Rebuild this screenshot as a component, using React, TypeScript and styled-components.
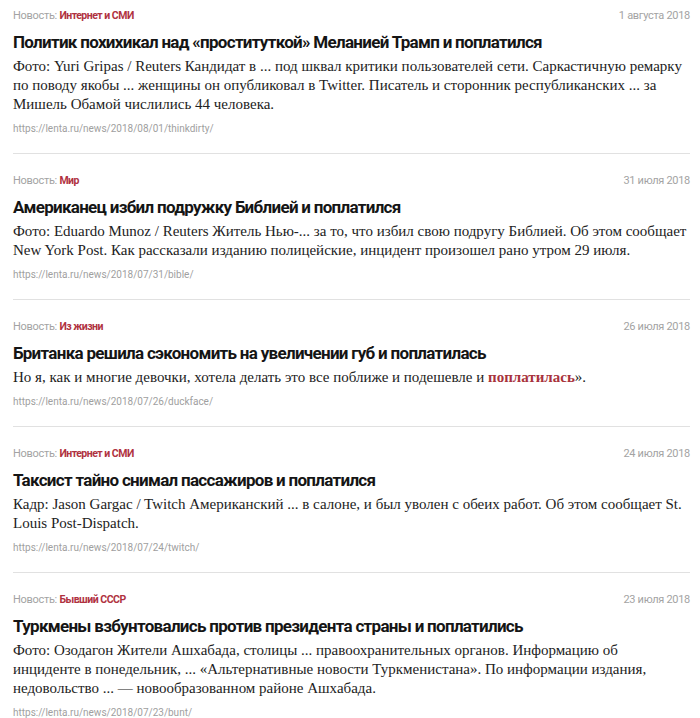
import styled, { createGlobalStyle } from 'styled-components';

const GlobalStyle = createGlobalStyle`
  body {
    margin: 0;
    background: #fff;
  }
`;

type NewsItem = {
  category: string;
  date: string;
  title: string;
  lines: React.ReactNode[];
  url: string;
};

const Strong = styled.b`
  color: #a8323c;
`;

// body text is kept in the same lines as on the page
const NEWS: NewsItem[] = [
  {
    category: 'Интернет и СМИ',
    date: '1 августа 2018',
    title: 'Политик похихикал над «проституткой» Меланией Трамп и поплатился',
    lines: [
      'Фото: Yuri Gripas / Reuters Кандидат в ... под шквал критики пользователей сети. Саркастичную ремарку',
      'по поводу якобы ... женщины он опубликовал в Twitter. Писатель и сторонник республиканских ... за',
      'Мишель Обамой числились 44 человека.',
    ],
    url: 'https://lenta.ru/news/2018/08/01/thinkdirty/',
  },
  {
    category: 'Мир',
    date: '31 июля 2018',
    title: 'Американец избил подружку Библией и поплатился',
    lines: [
      'Фото: Eduardo Munoz / Reuters Житель Нью-... за то, что избил свою подругу Библией. Об этом сообщает',
      'New York Post. Как рассказали изданию полицейские, инцидент произошел рано утром 29 июля.',
    ],
    url: 'https://lenta.ru/news/2018/07/31/bible/',
  },
  {
    category: 'Из жизни',
    date: '26 июля 2018',
    title: 'Британка решила сэкономить на увеличении губ и поплатилась',
    lines: [
      <>
        Но я, как и многие девочки, хотела делать это все поближе и подешевле и{' '}
        <Strong>поплатилась</Strong>».
      </>,
    ],
    url: 'https://lenta.ru/news/2018/07/26/duckface/',
  },
  {
    category: 'Интернет и СМИ',
    date: '24 июля 2018',
    title: 'Таксист тайно снимал пассажиров и поплатился',
    lines: [
      'Кадр: Jason Gargac / Twitch Американский ... в салоне, и был уволен с обеих работ. Об этом сообщает St.',
      'Louis Post-Dispatch.',
    ],
    url: 'https://lenta.ru/news/2018/07/24/twitch/',
  },
  {
    category: 'Бывший СССР',
    date: '23 июля 2018',
    title: 'Туркмены взбунтовались против президента страны и поплатились',
    lines: [
      'Фото: Озодагон Жители Ашхабада, столицы ... правоохранительных органов. Информацию об',
      'инциденте в понедельник, ... «Альтернативные новости Туркменистана». По информации издания,',
      'недовольство ... — новообразованном районе Ашхабада.',
    ],
    url: 'https://lenta.ru/news/2018/07/23/bunt/',
  },
];

const List = styled.div`
  display: flex;
  flex-direction: column;
  padding: 0 10px 0 13px;
`;

const Item = styled.article`
  display: flex;
  flex-direction: column;
  padding: 20px 0 17px;
  border-bottom: 1px solid #e1e1e1;

  &:first-child {
    padding-top: 9px;
  }
  &:last-child {
    border-bottom: none;
  }
`;

const Meta = styled.div`
  display: flex;
  justify-content: space-between;
  align-items: baseline;
  font-family: Roboto, 'Liberation Sans', sans-serif;
  font-size: 11px;
  line-height: 14px;
  letter-spacing: -0.3px;
  color: #a3a3a3;
`;

const Category = styled.span`
  color: #b0323f;
  font-weight: 700;
  font-size: 10.5px;
  letter-spacing: -0.5px;
`;

const Title = styled.h2`
  margin: 8px 0 4px;
  font-family: Roboto, 'Liberation Sans', sans-serif;
  font-weight: 700;
  font-size: 17px;
  letter-spacing: -0.7px;
  line-height: 22px;
  color: #151515;
`;

const Body = styled.p`
  margin: 0;
  font-family: 'Liberation Serif', serif;
  font-size: 15px;
  line-height: 19px;
  color: #222;
`;

const Line = styled.span`
  display: block;
  white-space: nowrap;
`;

const Url = styled.div`
  margin-top: 8px;
  font-family: Roboto, 'Liberation Sans', sans-serif;
  font-size: 10px;
  line-height: 14px;
  color: #a0a0a0;
`;

export default function App() {
  return (
    <>
      <GlobalStyle />
      <List>
        {NEWS.map((n) => (
          <Item key={n.url}>
            <Meta>
              <span>
                Новость: <Category>{n.category}</Category>
              </span>
              <span>{n.date}</span>
            </Meta>
            <Title>{n.title}</Title>
            <Body>
              {n.lines.map((line, i) => (
                <Line key={i}>{line}</Line>
              ))}
            </Body>
            <Url>{n.url}</Url>
          </Item>
        ))}
      </List>
    </>
  );
}
